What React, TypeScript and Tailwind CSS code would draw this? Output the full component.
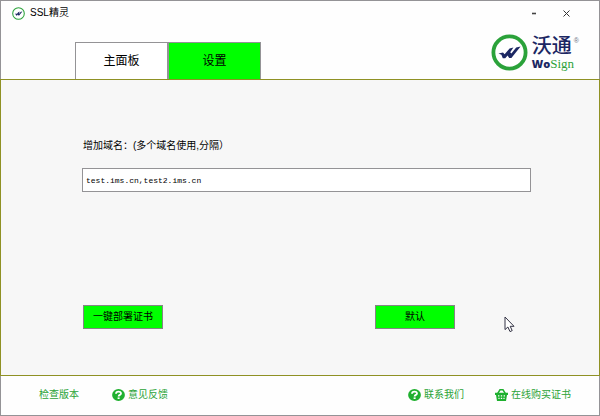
import React from "react";

function RingLogo({ className, ring }: { className: string; ring: number }) {
  return (
    <svg className={className} viewBox="0 0 37 37" aria-hidden="true">
      <circle cx="18.5" cy="18.5" r={18 - ring / 2} fill="#fff" stroke="#2ba23a" strokeWidth={ring} />
      <path
        d="M7.5 19.6 L12 18.4 L13.6 20.2 L18.6 14.4 L22.4 13.4 L19.2 18.2 L20.4 19.4 L25.2 13.6 L29.6 12.6 L20.4 24 H18.2 L16.6 21.4 L14.2 24.2 H11.8 L10.4 20.8 Z"
        fill="#1c2763"
      />
    </svg>
  );
}

function HelpIcon() {
  return (
    <svg className="h-3 w-[13px]" viewBox="0 0 13 12" aria-hidden="true">
      <ellipse cx="6.5" cy="6" rx="6.4" ry="6" fill="#1fb02f" />
      <path d="M4 4.8 C4 2 9 2 9 4.5 C9 6 6.6 5.8 6.6 7.4" fill="none" stroke="#fff" strokeWidth="1.8" />
      <rect x="5.6" y="8.4" width="2" height="1.6" fill="#fff" />
    </svg>
  );
}

function BasketIcon() {
  return (
    <svg className="h-3 w-[13px]" viewBox="0 0 13 12" aria-hidden="true">
      <path d="M2.6 4.6 L5 0.8 H8 L10.4 4.6" fill="none" stroke="#1fb02f" strokeWidth="1.5" />
      <path d="M0 3.8 H13 V6 H12 L11 12 H2 L1 6 H0 Z" fill="#1fb02f" />
      <path d="M3 6.8 H4.4 M5.8 6.8 H7.2 M8.6 6.8 H10 M3.4 9.4 H4.6 M5.8 9.4 H7.2 M8.4 9.4 H9.6" stroke="#fff" strokeWidth="1.2" />
    </svg>
  );
}

function Brand() {
  return (
    <div className="flex gap-1 pt-[5px] text-[#1c2763]">
      <RingLogo className="size-[37px]" ring={3.8} />
      <div className="flex flex-col pt-0.5">
        <div className="flex items-start gap-0.5">
          <span className="text-[20px] leading-5 font-medium">沃通</span>
          <span className="pt-px font-['Liberation_Sans',sans-serif] text-[7px] leading-2 text-gray-500">®</span>
        </div>
        <div className="flex items-baseline leading-4">
          <span className="font-['Open_Sans',sans-serif] text-[11px] leading-4 font-extrabold">Wo</span>
          <span className="font-['Liberation_Serif',serif] text-[13px] leading-4 text-[#2ba23a]">Sign</span>
        </div>
      </div>
    </div>
  );
}

const footerLink = "flex items-center gap-[3px] whitespace-nowrap text-[10px] leading-4 text-[#2aa336]";
const actionButton = "h-6 w-20 border border-[#858585] bg-[#00ff00] text-[10px] leading-4 text-black";

export default function App() {
  return (
    <div
      lang="zh-CN"
      className="flex min-h-screen flex-col border border-[#949396] bg-[#fefefe] font-['Liberation_Sans','Noto_Sans_CJK_SC',sans-serif] text-black"
    >
      <header>
        <div className="flex h-7 items-center justify-between pr-[29px] pl-[11px]">
          <div className="flex items-center gap-[5px] pb-1">
            <RingLogo className="size-[13px]" ring={3} />
            <h1 className="text-[10px] leading-4">SSL精灵</h1>
          </div>
          <div className="flex items-center gap-6 pb-1">
            <button type="button" aria-label="最小化" className="flex h-4 w-2 items-center justify-center">
              <svg className="h-2 w-1" viewBox="0 0 4 8"><path d="M0 4.5 H4" stroke="#444" strokeWidth="1.6" /></svg>
            </button>
            <button type="button" aria-label="关闭" className="flex h-4 w-2 items-center justify-center">
              <svg className="size-[7px] shrink-0" viewBox="0 0 7 7"><path d="M0.5 0.5 L6.5 6.5 M6.5 0.5 L0.5 6.5" stroke="#333" /></svg>
            </button>
          </div>
        </div>
        <div className="flex h-[50px] justify-between pr-5 pl-[74px]">
          <nav className="flex items-end">
            <button type="button" className="h-[37px] w-[93px] border border-b-0 border-[#949396] bg-white text-[12px]">
              主面板
            </button>
            <button type="button" className="h-[37px] w-[93px] border border-b-0 border-[#949396] bg-[#00ff00] text-[12px]">
              设置
            </button>
          </nav>
          <Brand />
        </div>
      </header>

      <main className="relative -mx-px flex flex-1 flex-col border border-[#8f9124] bg-[#f7f7f7] pt-[58px] pr-[68px] pb-[46px] pl-[81px]">
        <label htmlFor="domains" className="pl-px text-[10px] leading-4">
          增加域名：(多个域名使用,分隔）
        </label>
        <input
          id="domains"
          type="text"
          defaultValue="test.ims.cn,test2.ims.cn"
          className="mt-[14px] h-6 w-full border border-[#949396] bg-white px-[3px] font-['Liberation_Mono',monospace] text-[8px] text-black outline-none"
        />
        <div className="mt-auto flex justify-between pr-[76px] pl-px">
          <button type="button" className={actionButton}>一键部署证书</button>
          <button type="button" className={actionButton}>默认</button>
        </div>
        <svg className="absolute right-[84px] bottom-[42px] h-[17px] w-[11px]" viewBox="0 0 11 17" aria-hidden="true">
          <path d="M1 1 V13.6 L3.9 11 L6 15.6 L8.2 14.6 L6.2 10.3 H10 Z" fill="#fff" stroke="#333344" />
        </svg>
      </main>

      <footer className="flex h-[39px] items-center justify-between pr-[28px] pb-0.5 pl-[38px]">
        <div className="flex gap-[33px]">
          <a href="#version" className={footerLink}>检查版本</a>
          <a href="#feedback" className={footerLink}><HelpIcon />意见反馈</a>
        </div>
        <div className="flex gap-[31px]">
          <a href="#contact" className={footerLink}><HelpIcon />联系我们</a>
          <a href="#buy" className={footerLink}><BasketIcon />在线购买证书</a>
        </div>
      </footer>
    </div>
  );
}
